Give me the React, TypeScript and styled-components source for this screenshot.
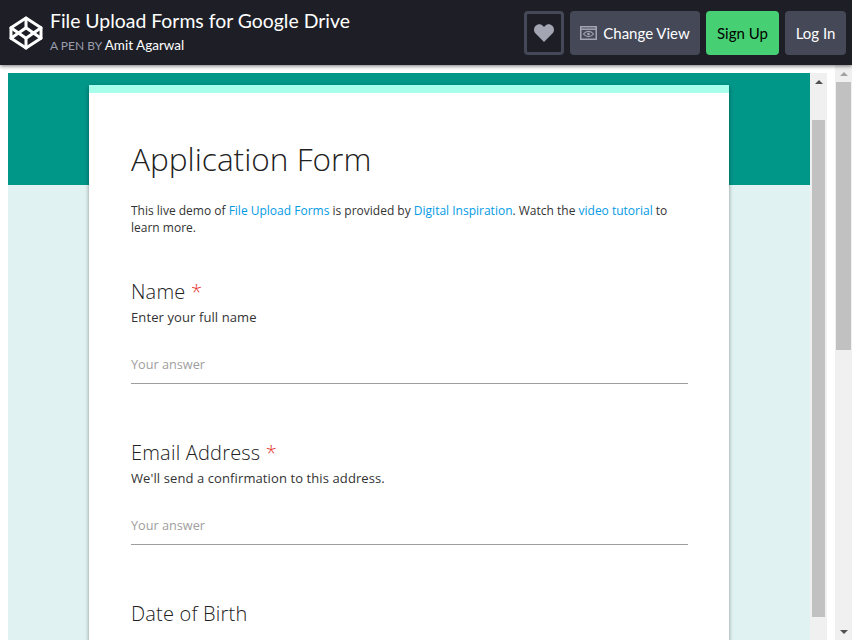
import styled, { createGlobalStyle } from "styled-components";
import { Codepen } from "lucide-react";

const GlobalStyle = createGlobalStyle`
  html, body {
    margin: 0;
    padding: 0;
    height: 100%;
    overflow: hidden;
    background: #fff;
  }
  * { box-sizing: border-box; }
`;

const Page = styled.div`
  width: 852px;
  height: 640px;
  display: flex;
  flex-direction: column;
  overflow: hidden;
`;

const Header = styled.header`
  height: 65px;
  flex: none;
  display: flex;
  align-items: center;
  padding: 0 6px 0 8px;
  background: #1e1f26;
  box-shadow: 0 1px 4px rgba(0, 0, 0, 0.55);
  position: relative;
  font-family: Lato, "Liberation Sans", sans-serif;
`;

const Logo = styled.div`
  width: 36px;
  height: 36px;
  flex: none;
  color: #fff;
  margin-right: 6px;
  display: flex;
`;

const PenInfo = styled.div`
  flex: 1;
  min-width: 0;
  margin-top: -1px;
`;

const PenTitle = styled.h1`
  margin: 0;
  font-size: 19.4px;
  line-height: 24px;
  font-weight: 400;
  color: #fff;
`;

const PenBy = styled.div`
  font-size: 12px;
  line-height: 18px;
  margin-top: 3px;
  color: #9b9dad;

  b {
    font-weight: 400;
    color: #fff;
    font-size: 13.5px;
  }
`;

const Actions = styled.div`
  display: flex;
  gap: 6px;
`;

const HeartButton = styled.button`
  width: 40px;
  height: 44px;
  padding: 0;
  display: flex;
  align-items: center;
  justify-content: center;
  background: transparent;
  border: 3px solid #444857;
  border-radius: 4px;
  color: #a3a5b3;
`;

const Button = styled.button<{ $green?: boolean; $w: number }>`
  width: ${(p) => p.$w}px;
  height: 44px;
  padding: 0;
  display: flex;
  align-items: center;
  justify-content: center;
  gap: 6px;
  border: none;
  border-radius: 4px;
  background: ${(p) => (p.$green ? "#47cf73" : "#444857")};
  color: ${(p) => (p.$green ? "#000" : "#fff")};
  font-family: Lato, "Liberation Sans", sans-serif;
  font-size: 15px;
`;

const Body = styled.div`
  flex: 1;
  min-height: 0;
  display: flex;
`;

const Frame = styled.div`
  width: 802px;
  flex: none;
  margin: 8px 0 0 8px;
  overflow: hidden;
  padding-top: 12px;
  background: linear-gradient(#009688 112px, #e0f2f1 112px);
  font-family: "Open Sans", "Liberation Sans", sans-serif;
`;

const Card = styled.main`
  width: 640px;
  margin-left: 81px;
  padding: 44px 41px 0 42px;
  min-height: 700px;
  background: #fff;
  border-top: 8px solid #a7ffeb;
  box-shadow: 0 2px 4px rgba(0, 0, 0, 0.4);
  color: #212121;
`;

const Title = styled.h2`
  margin: 0;
  font-size: 31.6px;
  line-height: 44px;
  font-weight: 300;
`;

const Intro = styled.p`
  margin: 21px 0 0;
  font-size: 12px;
  line-height: 17px;
  color: #333;

  a {
    color: #039be5;
    text-decoration: none;
  }
`;

const Field = styled.section`
  margin-top: 42px;

  & + & {
    margin-top: 55px;
  }
`;

const Label = styled.div`
  font-size: 20px;
  line-height: 28px;
  font-weight: 300;
  letter-spacing: 0.2px;

  span {
    color: #e53935;
  }
`;

const Help = styled.div`
  font-size: 13px;
  line-height: 18px;
  margin-top: 2px;
  letter-spacing: 0.1px;
  color: #333;
`;

const Answer = styled.div`
  margin-top: 20px;
  height: 38px;
  padding-top: 9px;
  font-size: 12.7px;
  line-height: 18px;
  color: #9e9e9e;
  border-bottom: 1px solid #9e9e9e;
`;

const Track = styled.div<{ $w: number; $ml: number; $mt: number }>`
  width: ${(p) => p.$w}px;
  margin: ${(p) => p.$mt}px 0 0 ${(p) => p.$ml}px;
  flex: none;
  display: flex;
  flex-direction: column;
  align-items: center;
  background: #f0f0f0;
`;

const Arrow = styled.div<{ $down?: boolean; $color: string }>`
  width: 0;
  height: 0;
  flex: none;
  border-left: 4px solid transparent;
  border-right: 4px solid transparent;
  ${(p) =>
    p.$down
      ? `border-top: 4px solid ${p.$color};`
      : `border-bottom: 4px solid ${p.$color};`}
`;

const TrackSpace = styled.div`
  flex: 1;
  width: 100%;
  min-height: 0;
  display: flex;
  flex-direction: column;
  align-items: center;
`;

const Thumb = styled.div<{ $w: number; $top: number; $h: number }>`
  width: ${(p) => p.$w}px;
  height: ${(p) => p.$h}px;
  margin-top: ${(p) => p.$top}px;
  background: #c1c1c1;
`;

const ArrowSlot = styled.div`
  height: 17px;
  flex: none;
  display: flex;
  align-items: center;
  justify-content: center;
`;

function Scrollbar({ marginLeft, marginTop, top, height, thumb, color, downArrow }: {
  marginLeft: number;
  marginTop: number;
  top: number;
  height: number;
  thumb: number;
  color: string;
  downArrow?: boolean;
}) {
  return (
    <Track $w={17} $ml={marginLeft} $mt={marginTop}>
      <ArrowSlot><Arrow $color={color} /></ArrowSlot>
      <TrackSpace>
        <Thumb $w={thumb} $top={top} $h={height} />
      </TrackSpace>
      {downArrow && <ArrowSlot><Arrow $down $color="#505050" /></ArrowSlot>}
    </Track>
  );
}

export default function App() {
  return (
    <Page>
      <GlobalStyle />
      <Header>
        <Logo><Codepen size={36} strokeWidth={2} /></Logo>
        <PenInfo>
          <PenTitle>File Upload Forms for Google Drive</PenTitle>
          <PenBy>A PEN BY <b>Amit Agarwal</b></PenBy>
        </PenInfo>
        <Actions>
          <HeartButton aria-label="Love">
            <svg width="20" height="18" viewBox="0 0 20 18" fill="currentColor">
              <path d="M10 18 1.6 9.6C-.5 7.4-.5 4 1.5 2 3.6-.2 7-.2 9 1.9l1 1 1-1c2-2.1 5.4-2.1 7.5.1 2 2 2 5.4-.1 7.6z" />
            </svg>
          </HeartButton>
          <Button $w={130}>
            <svg width="17" height="14" viewBox="0 0 17 14" fill="none" stroke="#a3a5b3">
              <rect x="0.75" y="0.75" width="15.5" height="12.5" strokeWidth="1.5" />
              <path d="M1 3.2h15" strokeWidth="1.5" />
              <path d="M3.5 8c1.5-2 3.2-2.6 5-2.6s3.5.6 5 2.6c-1.5 2-3.2 2.6-5 2.6S5 10 3.5 8z" strokeWidth="1.2" />
              <circle cx="8.5" cy="8" r="1.3" fill="#a3a5b3" stroke="none" />
            </svg>
            Change View
          </Button>
          <Button $w={73} $green>Sign Up</Button>
          <Button $w={61}>Log In</Button>
        </Actions>
      </Header>
      <Body>
        <Frame>
          <Card>
            <Title>Application Form</Title>
            <Intro>
              This live demo of <a href="#">File Upload Forms</a> is provided by{" "}
              <a href="#">Digital Inspiration</a>. Watch the <a href="#">video tutorial</a> to
              learn more.
            </Intro>
            <Field>
              <Label>Name <span>*</span></Label>
              <Help>Enter your full name</Help>
              <Answer>Your answer</Answer>
            </Field>
            <Field>
              <Label>Email Address <span>*</span></Label>
              <Help>We'll send a confirmation to this address.</Help>
              <Answer>Your answer</Answer>
            </Field>
            <Field>
              <Label>Date of Birth</Label>
            </Field>
          </Card>
        </Frame>
        <Scrollbar marginLeft={0} marginTop={8} top={30} height={497} thumb={13} color="#505050" />
        <Scrollbar marginLeft={8} marginTop={0} top={0} height={268} thumb={15} color="#a3a3a3" downArrow />
      </Body>
    </Page>
  );
}
